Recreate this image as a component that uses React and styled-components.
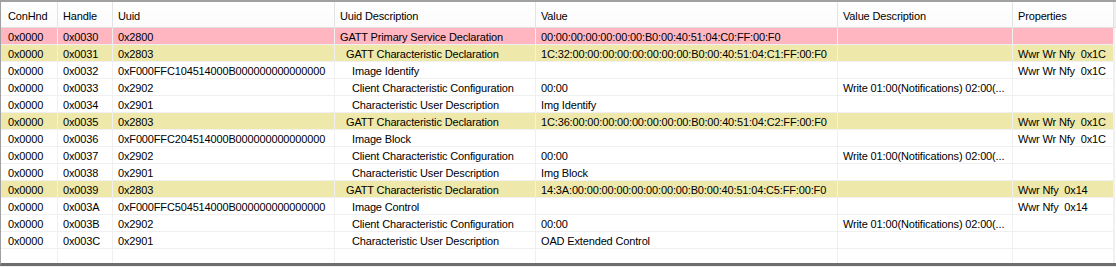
import React from 'react';
import styled, { createGlobalStyle } from 'styled-components';

const columns = [
  { title: 'ConHnd', width: '57px', first: true },
  { title: 'Handle', width: '55px' },
  { title: 'Uuid', width: '222px' },
  { title: 'Uuid Description', width: '201px' },
  { title: 'Value', width: '302px' },
  { title: 'Value Description', width: '175px' },
  { title: 'Properties', width: '101px' },
];

const template = columns.map((c) => c.width).join(' ') + ' 1fr';

const CCC = 'Write 01:00(Notifications) 02:00(...';

const rows = [
  { tone: 'service', handle: '0x0030', uuid: '0x2800', desc: 'GATT Primary Service Declaration', level: 0, value: '00:00:00:00:00:00:00:B0:00:40:51:04:C0:FF:00:F0', vdesc: '', props: '' },
  { tone: 'decl', handle: '0x0031', uuid: '0x2803', desc: 'GATT Characteristic Declaration', level: 1, value: '1C:32:00:00:00:00:00:00:00:00:B0:00:40:51:04:C1:FF:00:F0', vdesc: '', props: 'Wwr Wr Nfy  0x1C' },
  { handle: '0x0032', uuid: '0xF000FFC104514000B000000000000000', desc: 'Image Identify', level: 2, value: '', vdesc: '', props: 'Wwr Wr Nfy  0x1C' },
  { handle: '0x0033', uuid: '0x2902', desc: 'Client Characteristic Configuration', level: 2, value: '00:00', vdesc: CCC, props: '' },
  { handle: '0x0034', uuid: '0x2901', desc: 'Characteristic User Description', level: 2, value: 'Img Identify', vdesc: '', props: '' },
  { tone: 'decl', handle: '0x0035', uuid: '0x2803', desc: 'GATT Characteristic Declaration', level: 1, value: '1C:36:00:00:00:00:00:00:00:00:B0:00:40:51:04:C2:FF:00:F0', vdesc: '', props: 'Wwr Wr Nfy  0x1C' },
  { handle: '0x0036', uuid: '0xF000FFC204514000B000000000000000', desc: 'Image Block', level: 2, value: '', vdesc: '', props: 'Wwr Wr Nfy  0x1C' },
  { handle: '0x0037', uuid: '0x2902', desc: 'Client Characteristic Configuration', level: 2, value: '00:00', vdesc: CCC, props: '' },
  { handle: '0x0038', uuid: '0x2901', desc: 'Characteristic User Description', level: 2, value: 'Img Block', vdesc: '', props: '' },
  { tone: 'decl', handle: '0x0039', uuid: '0x2803', desc: 'GATT Characteristic Declaration', level: 1, value: '14:3A:00:00:00:00:00:00:00:00:B0:00:40:51:04:C5:FF:00:F0', vdesc: '', props: 'Wwr Nfy  0x14' },
  { handle: '0x003A', uuid: '0xF000FFC504514000B000000000000000', desc: 'Image Control', level: 2, value: '', vdesc: '', props: 'Wwr Nfy  0x14' },
  { handle: '0x003B', uuid: '0x2902', desc: 'Client Characteristic Configuration', level: 2, value: '00:00', vdesc: CCC, props: '' },
  { handle: '0x003C', uuid: '0x2901', desc: 'Characteristic User Description', level: 2, value: 'OAD Extended Control', vdesc: '', props: '' },
];

const tones = {
  service: '#ffb6c1',
  decl: '#eee8aa',
};

function App() {
  return (
    <>
      <GlobalStyle />
      <Frame>
        <Header>
          {columns.map((c) => (
            <HeaderCell key={c.title} $first={c.first}>
              {c.title}
            </HeaderCell>
          ))}
          <HeaderFiller />
        </Header>

        {rows.map((r) => (
          <Row key={r.handle} $bg={tones[r.tone] || '#fff'}>
            <Cell $first>0x0000</Cell>
            <Cell>{r.handle}</Cell>
            <Cell>{r.uuid}</Cell>
            <Cell $indent={r.level * 6}>{r.desc}</Cell>
            <Cell>{r.value}</Cell>
            <Cell>{r.vdesc}</Cell>
            <Cell>{r.props}</Cell>
            <Filler />
          </Row>
        ))}

        {/* new-row placeholder at the bottom of the grid */}
        <Row $bg="#fff">
          {columns.map((c) => (
            <Cell key={c.title} $first={c.first} />
          ))}
          <Filler />
        </Row>
      </Frame>
    </>
  );
}

const GlobalStyle = createGlobalStyle`
  html, body {
    margin: 0;
    padding: 0;
    background: #f0f0f0;
  }
`;

const Frame = styled.div`
  box-sizing: border-box;
  width: 1116px;
  height: 266px;
  overflow: hidden;
  background: #fff;
  border-top: 2px solid #a0a0a0;
  border-left: 1px solid #a0a0a0;
  border-bottom: 3px solid #6d6d6d;
  font-family: "Liberation Sans", Arial, sans-serif;
  font-size: 11px;
  letter-spacing: -0.15px;
  color: #000;
`;

const Header = styled.div`
  display: grid;
  grid-template-columns: ${template};
  height: 26px;
  background: linear-gradient(#ffffff, #fbfbfb);
  border-bottom: 1px solid #e0e0e0;
  box-sizing: border-box;
`;

const HeaderCell = styled.div`
  box-sizing: border-box;
  padding-left: ${(p) => (p.$first ? 7 : 5)}px;
  line-height: 28px;
  border-right: 1px solid #e3e3e3;
  white-space: nowrap;
  overflow: hidden;
`;

const HeaderFiller = styled.div`
  background: #f0f0f0;
`;

const Row = styled.div`
  display: grid;
  grid-template-columns: ${template};
  height: 17px;
  background: ${(p) => p.$bg};
`;

const Cell = styled.div`
  box-sizing: border-box;
  height: 17px;
  padding-left: ${(p) => (p.$first ? 7 : 5) + (p.$indent || 0)}px;
  line-height: 18px;
  border-right: 1px solid #f0f0f0;
  border-bottom: 1px solid #f0f0f0;
  white-space: pre;
  overflow: hidden;
`;

const Filler = styled.div`
  background: #fff;
  border-left: 1px solid #f0f0f0;
`;

export default App;
